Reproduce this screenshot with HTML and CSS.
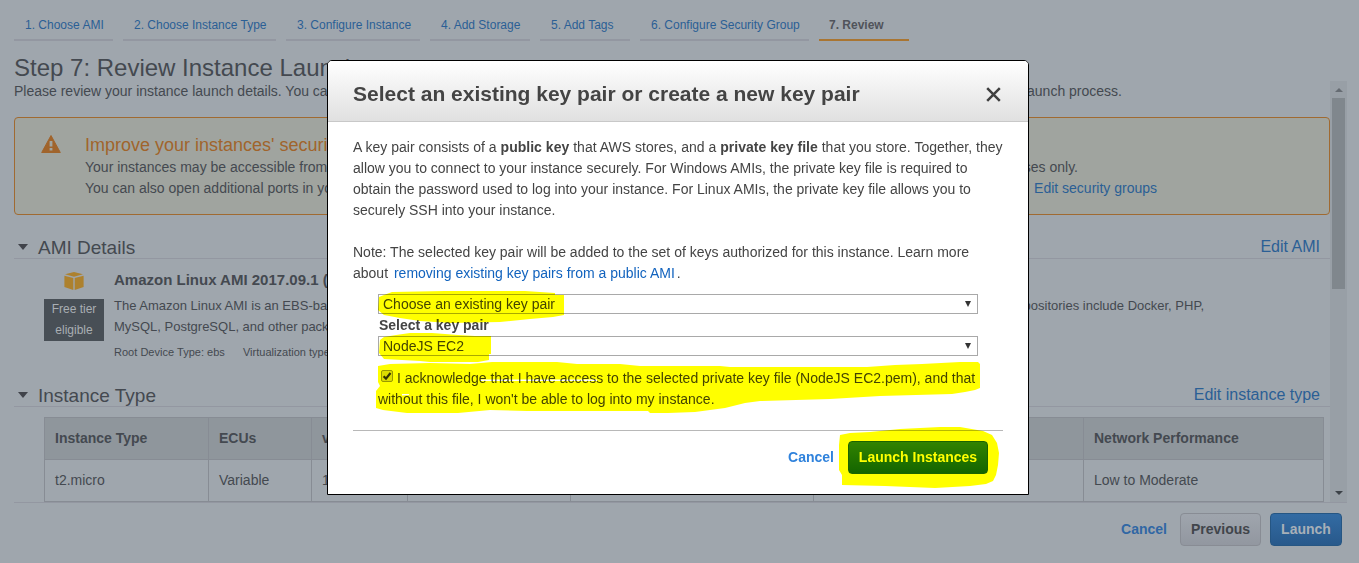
FILE: index.html
```html
<!DOCTYPE html>
<html lang="en">
<head>
<meta charset="utf-8">
<title>Step 7: Review Instance Launch</title>
<link rel="stylesheet" href="styles.css">
</head>
<body>
<div class="page">
  <nav class="tabs">
    <a class="tab t1">1. Choose AMI</a>
    <a class="tab t2">2. Choose Instance Type</a>
    <a class="tab t3">3. Configure Instance</a>
    <a class="tab t4">4. Add Storage</a>
    <a class="tab t5">5. Add Tags</a>
    <a class="tab t6">6. Configure Security Group</a>
    <a class="tab t7 active">7. Review</a>
  </nav>
  <h1 class="title">Step 7: Review Instance Launch</h1>
  <div class="viewport">
    <main class="content">
      <p class="intro split"><span>Please review your instance launch details. You can</span><span>launch process.</span></p>
      <section class="alert">
        <svg class="warn" width="20" height="18" viewBox="0 0 20 18"><path d="M10 .5 19.3 17.5H.7Z" fill="#a0642c" stroke="#a0642c" stroke-linejoin="round"/><path d="M8.6 6h2.8v5.500H8.600zM8.600 13h2.800v2.400H8.600z" fill="#a0a49f"/></svg>
        <div class="alert-text">
          <h2>Improve your instances' security</h2>
          <p class="split l1"><span>Your instances may be accessible from</span><span>addresses only.</span></p>
          <p class="split l2"><span>You can also open additional ports in your</span><a>Edit security groups</a></p>
        </div>
      </section>
      <header class="section ami"><i class="caret"></i><h3>AMI Details</h3><a>Edit AMI</a></header>
      <div class="ami-body">
        <div class="badge-col">
          <svg width="20" height="18" viewBox="0 0 20 18" fill="#ad812e"><path d="M10 0 19 2.3 10 4.7 1 2.3ZM.4 3.8 9.3 6.1V18L.4 15.1ZM19.6 3.8 10.7 6.1V18l8.900-2.900Z"/></svg>
          <span class="free">Free tier<br>eligible</span>
        </div>
        <div class="ami-text">
          <h4>Amazon Linux AMI 2017.09.1 (</h4>
          <p class="split"><span>The Amazon Linux AMI is an EBS-backed</span><span>repositories include Docker, PHP,</span></p>
          <p>MySQL, PostgreSQL, and other packages</p>
          <p class="meta"><span>Root Device Type: ebs</span><span>Virtualization type:</span></p>
        </div>
      </div>
      <header class="section itype"><i class="caret"></i><h3>Instance Type</h3><a>Edit instance type</a></header>
      <table class="grid">
        <colgroup><col class="c1"><col class="c2"><col class="c3"><col class="c4"><col class="c5"><col class="c6"><col class="c7"></colgroup>
        <tr><th>Instance Type</th><th>ECUs</th><th>vCPUs</th><th></th><th></th><th></th><th>Network Performance</th></tr>
        <tr><td>t2.micro</td><td>Variable</td><td>1</td><td></td><td></td><td></td><td>Low to Moderate</td></tr>
      </table>
    </main>
    <div class="scrollbar"><i class="up"></i><div class="thumb"></div><i class="down"></i></div>
  </div>
  <footer class="actions"><a>Cancel</a><button class="btn prev">Previous</button><button class="btn launch">Launch</button></footer>

  <div class="modal">
    <header class="modal-head"><h2>Select an existing key pair or create a new key pair</h2>
      <svg width="15" height="15" viewBox="0 0 15 15"><path d="M1.200 1.200 13.800 13.800M13.800 1.200 1.200 13.800" stroke="#3f3f3f" stroke-width="2.500"/></svg>
    </header>
    <div class="modal-body">
      <p><span class="m1">A key pair consists of a <b>public key</b> that AWS stores, and a <b>private key file</b> that you store. Together, they</span><br><span class="m2">allow you to connect to your instance securely. For Windows AMIs, the private key file is required to</span><br><span class="m3">obtain the password used to log into your instance. For Linux AMIs, the private key file allows you to</span><br><span class="m4">securely SSH into your instance.</span></p>
      <p class="note"><span class="m5">Note: The selected key pair will be added to the set of keys authorized for this instance. Learn more</span><br><span class="m6">about <a>removing existing key pairs from a public AMI</a>.</span></p>
      <div class="form">
        <div class="select"><span>Choose an existing key pair</span><i></i></div>
        <label class="pick">Select a key pair</label>
        <div class="select"><span>NodeJS EC2</span><i></i></div>
        <p class="ack"><svg width="12" height="12" viewBox="0 0 12 12"><rect x=".5" y=".5" width="11" height="11" rx="1.500" fill="#dcdcdc" stroke="#999"/><path d="M2.600 6.200 5 8.600 9.500 3" fill="none" stroke="#333" stroke-width="2.200"/></svg><span class="m7">I acknowledge that I have access to the selected private key file (NodeJS EC2.pem), and that</span><br><span class="m8">without this file, I won't be able to log into my instance.</span></p>
      </div>
      <footer class="modal-foot"><a>Cancel</a><button class="btn green">Launch Instances</button></footer>
    </div>
    <svg class="marker" width="702" height="435" viewBox="327 60 702 435" fill="#ff0">
      <path d="M379 297 384 295 392 292 445 291H525L555 293V295H564V315L553 317 530 319 500 322 450 323 420 321 400 318 384 315 378 310Z"/>
      <path d="M380 340 384 337 396 335 410 333H432L458 335 475 336H491V354H489V360L478 362H430L420 361 384 359 379 353Z"/>
      <path fill-rule="evenodd" d="M378 366 390 364 430 363 470 364 492 362H557L577 364H620L640 366H720L730 367H867L895 365 922 364 960 362H978L980 364V388L975 390 965 392 952 394 880 396 830 399 760 401 745 403 725 408 695 412 668 413H650L648 411H527L490 410 458 413H407L383 410 376 408V391L380 386 378 382ZM480 379.500V381H597V379.500ZM402 394V395.500L409 395V394Z"/>
      <path d="M840 435 850 433 870 432 900 429 940 427H960L983 431 992 435 997 443 999 453 998 465 996 475 993 481 986 484 970 486 935 488 885 486 842 485V475L839 470V445Z"/>
    </svg>
  </div>
</div>
</body>
</html>
```
FILE: styles.css
```css
* { box-sizing: border-box; }
body { margin: 0; background: #9fa6ad; font: 14px/21px "Liberation Sans", Arial, sans-serif; color: #444950; }
h1, h2, h3, h4, p { margin: 0; font-weight: normal; }
a { color: #2b5f95; }
.page { position: relative; width: 1359px; height: 563px; overflow: hidden; white-space: nowrap; }

.tabs { display: flex; gap: 10px; padding: 10px 14px 0; height: 41px; }
.tab { padding: 5px 0 0 11px; height: 31px; border-bottom: 2px solid #9397a1; font-size: 12px; }
.t1 { width: 99px; } .t2 { width: 153px; } .t3 { width: 134px; } .t4 { width: 100px; }
.t5 { width: 90px; } .t6 { width: 169px; } .t7 { width: 90px; }
.tab.active { padding-left: 10px; border-color: #a97532; color: #50535a; font-weight: bold; }
.title { padding: 12px 0 0 14px; height: 40px; font-size: 24px; line-height: 30px; }

.viewport { display: flex; margin-left: 14px; width: 1333px; height: 422px; border-bottom: 1px solid #9397a1; }
.content { width: 1316px; }
.split { display: flex; justify-content: space-between; }
.intro { width: 1108px; height: 36px; }
.alert { display: flex; height: 98px; border: 1px solid #a06a31; border-radius: 4px; background: #a0a49f; }
.warn { margin: 17px 0 0 26px; }
.alert-text { padding: 17px 0 0 24px; }
.alert h2 { height: 22px; font-size: 18px; line-height: 20px; color: #a0642c; }
.l1 { width: 993px; } .l2 { width: 1072px; }

.section { display: flex; align-items: flex-end; width: 1316px; border-bottom: 1px solid #9397a1; }
.section h3 { flex: 1; font-size: 19px; line-height: 20px; }
.section > a { margin-right: 10px; font-size: 16px; line-height: 22px; }
.ami { height: 44px; }
.itype { height: 35px; }
.caret { margin: 0 10px 8px 4px; border: 5.5px solid transparent; border-top: 6px solid #40434a; border-bottom: 0; }
.ami-body { display: flex; height: 113px; padding-left: 30px; }
.badge-col { display: flex; flex-direction: column; align-items: center; width: 60px; padding-top: 13px; }
.free { width: 60px; height: 42px; margin-top: 9px; background: #484f56; color: #a9aeb3; font-size: 12px; text-align: center; }
.ami-text { padding: 10px 0 0 10px; }
.ami-text h4 { font-weight: bold; font-size: 15px; height: 26px; }
.ami-text p { font-size: 13px; }
.ami-text .split { width: 1090px; }
.ami-text .meta { display: flex; gap: 18px; margin-top: 5px; font-size: 11px; letter-spacing: .02px; }

.grid { margin: 10px 0 0 30px; width: 1280px; table-layout: fixed; border-collapse: collapse; }
.grid th, .grid td { height: 42px; padding: 0 10px; border: 1px solid #878c94; text-align: left; overflow: hidden; }
.grid th { background: #8f969c; }
.c1 { width: 164px; } .c2 { width: 103px; } .c3 { width: 96px; } .c4 { width: 163px; } .c5 { width: 243px; } .c6 { width: 270px; } .c7 { width: 240px; }

.scrollbar { display: flex; flex-direction: column; align-items: center; width: 17px; background: #989fa6; }
.up { margin-top: 7px; border: 4px solid transparent; border-bottom-color: #666c73; border-top: 0; }
.thumb { width: 13px; height: 191px; margin: 6px 0 202px; background: #80878d; }
.down { border: 4px solid transparent; border-top-color: #3c4248; border-bottom: 0; }

.actions { display: flex; justify-content: flex-end; align-items: center; margin-top: 10px; padding-right: 17px; }
.actions a { margin-right: 13px; color: #3067a4; font-weight: bold; }
.btn { height: 33px; padding: 0; border: 1px solid; border-radius: 4px; font: bold 14px/21px "Liberation Sans", Arial, sans-serif; }
.prev { width: 81px; margin-right: 9px; border-color: #888c94; background: linear-gradient(#9fa5ad, #9297a0); color: #41454b; }
.launch { width: 72px; border-color: #265683; background: linear-gradient(#336ba3, #28598b); color: #a8b0b8; }

.modal { position: absolute; left: 327px; top: 60px; width: 702px; height: 435px; border: 1px solid #000; border-radius: 5px 5px 0 0; background: #fff; color: #444; overflow: hidden; isolation: isolate; }
.modal-head { display: flex; justify-content: space-between; align-items: center; height: 61px; padding: 6px 27px 0 25px; border-bottom: 1px solid #c8c8c8; background: linear-gradient(#fff, #e0e0e0); }
.modal-head h2 { font-size: 21px; line-height: 24px; font-weight: bold; }
.modal-body { padding: 15px 25px 0; }
.modal a { color: #1263be; }
.m1 { letter-spacing: .02px; }
.m6 a { margin: 0 2px; }
.note { margin-top: 21px; }
.form { padding: 10px 25px 0; }
.select { display: flex; justify-content: space-between; align-items: center; width: 600px; height: 20px; padding: 0 6px 0 4px; border: 1px solid #a9a9a9; }
.select i { border: 3.5px solid transparent; border-top: 6px solid #333; border-bottom: 0; }
.pick { display: block; height: 22px; padding-left: 1px; line-height: 22px; font-weight: bold; }
.ack { margin-top: 12px; }
.ack svg { margin: 0 4px 0 3px; vertical-align: 1px; }
.modal-foot { display: flex; justify-content: flex-end; align-items: center; width: 650px; height: 54px; margin-top: 20px; padding-right: 15px; border-top: 1px solid #b8b8b8; }
.modal .modal-foot a { margin-right: 14px; color: #2f82dc; font-weight: bold; }
.green { width: 140px; border-color: #1b6300; background: linear-gradient(#318300, #146500); color: #fff; }
.marker { position: absolute; left: -1px; top: -1px; mix-blend-mode: multiply; pointer-events: none; }
```
